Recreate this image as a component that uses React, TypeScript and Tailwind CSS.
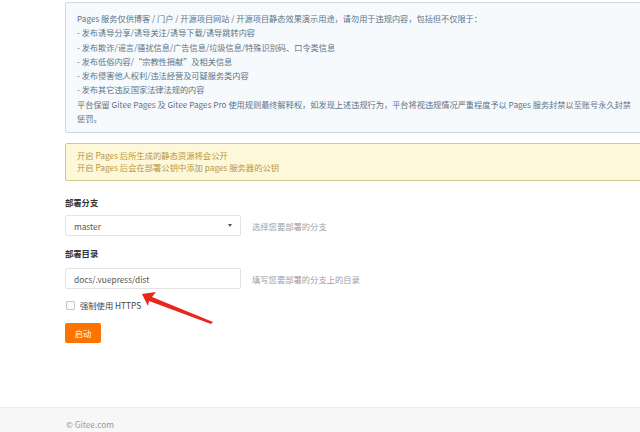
import React from "react";

const FONT = { fontFamily: '"Noto Sans CJK SC", "Noto Sans", sans-serif' };

const RULES = [
  "Pages 服务仅供博客 / 门户 / 开源项目网站 / 开源项目静态效果演示用途，请勿用于违规内容，包括但不仅限于：",
  "- 发布诱导分享/诱导关注/诱导下载/诱导跳转内容",
  "- 发布欺诈/谣言/骚扰信息/广告信息/垃圾信息/特殊识别码、口令类信息",
  "- 发布低俗内容/“宗教性捐献”及相关信息",
  "- 发布侵害他人权利/违法经营及可疑服务类内容",
  "- 发布其它违反国家法律法规的内容",
  "平台保留 Gitee Pages 及 Gitee Pages Pro 使用规则最终解释权，如发现上述违规行为，平台将视违规情况严重程度予以 Pages 服务封禁以至账号永久封禁",
  "惩罚。",
];

function Arrow() {
  return (
    <svg className="absolute left-0 top-0 pointer-events-none" width="640" height="432" viewBox="0 0 640 432">
      <path d="M142 294 L156 292 L152 297 L213 322 L211 324 L149 301 L148 306 Z" fill="#e8261c" />
    </svg>
  );
}

export default function App() {
  return (
    <div className="relative w-[640px] h-[432px] overflow-hidden bg-white flex flex-col" style={FONT}>
      <div className="pl-[65px] pt-[2px] flex-1">
        <div className="w-[620px] border border-[#cfd9e4] bg-[#f6fafd] rounded-[2px] pl-[11px] pt-[8px] pb-[7px] text-[8.2px] leading-[14.3px] text-[#5f7284]">
          {RULES.map((line) => (
            <div key={line} className="whitespace-nowrap">
              {line}
            </div>
          ))}
        </div>

        <div className="mt-[10px] w-[620px] h-[38px] border border-[#d5c68c] bg-[#fef8da] rounded-[2px] pl-[11px] pt-[6px] text-[8.3px] leading-[11.5px] text-[#b9953c]">
          <div>开启 Pages 后所生成的静态资源将会公开</div>
          <div>开启 Pages 后会在部署公钥中添加 pages 服务器的公钥</div>
        </div>

        <div className="mt-[15px] text-[8.3px] leading-[12px] font-bold text-[#333]">部署分支</div>
        <div className="mt-[7px] flex items-center gap-[11px]">
          <div className="w-[176px] h-[21px] border border-[#e3e3e3] rounded-[2px] bg-white flex items-center justify-between pl-[8px] pr-[8px]">
            <span className="text-[8.3px] text-[#555]">master</span>
            <span className="w-0 h-0 border-l-[2.5px] border-r-[2.5px] border-t-[3px] border-l-transparent border-r-transparent border-t-[#555]" />
          </div>
          <span className="text-[8.3px] text-[#a0a0a0]">选择您要部署的分支</span>
        </div>

        <div className="mt-[11px] text-[8.3px] leading-[12px] font-bold text-[#333]">部署目录</div>
        <div className="mt-[9px] flex items-center gap-[11px]">
          <div className="w-[176px] h-[21px] border border-[#e3e3e3] rounded-[2px] bg-white flex items-center pl-[8px]">
            <span className="text-[8.3px] text-[#555]">docs/.vuepress/dist</span>
          </div>
          <span className="text-[8.3px] text-[#a0a0a0]">填写您要部署的分支上的目录</span>
        </div>

        <div className="mt-[10px] flex items-center gap-[5px] ml-[1px]">
          <span className="w-[9px] h-[9px] border border-[#c8c8c8] rounded-[1px] bg-[#fafafa]" />
          <span className="text-[8.3px] text-[#444]">强制使用 HTTPS</span>
        </div>

        <button className="mt-[11px] w-[36px] h-[20px] bg-[#fe7300] rounded-[2px] text-white text-[8.3px] flex items-center justify-center">
          启动
        </button>
      </div>

      <div className="h-[25px] border-t border-[#ececec] bg-[#f7f7f7] pl-[66px] pt-[10px] text-[8.3px] leading-[12px] text-[#999]">
        © Gitee.com
      </div>

      <Arrow />
    </div>
  );
}
